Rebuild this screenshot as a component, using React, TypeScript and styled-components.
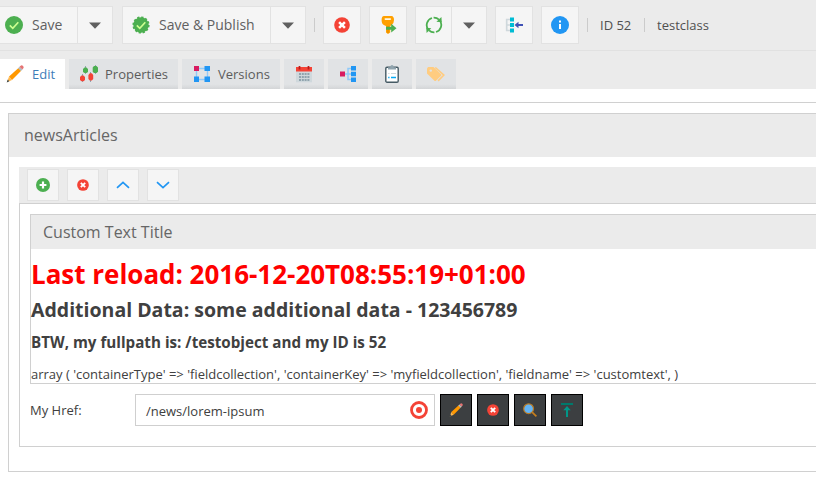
import React from 'react';
import styled, { createGlobalStyle, css } from 'styled-components';

const GlobalStyle = createGlobalStyle`
  *, *::before, *::after { box-sizing: border-box; }
  body {
    margin: 0;
    background: #fff;
    color: #404040;
    font: 13px/18px "Open Sans", "Noto Sans", sans-serif;
    overflow: hidden;
  }
  svg { display: block; flex: none; }
`;

const Page = styled.div`
  width: 816px;
  height: 498px;
  overflow: hidden;
  white-space: nowrap;
`;

const Toolbar = styled.div`
  display: flex;
  height: 51px;
  padding-top: 6px;
  background: #ebebeb;
  border-bottom: 1px solid #e1e1e1;
`;

const buttonFace = css`
  background: #f5f5f5;
  border: 1px solid #e2e2e2;
`;

const ToolButton = styled.div<{ $w?: number; $gap?: number }>`
  ${buttonFace}
  display: flex;
  align-items: center;
  justify-content: center;
  flex: none;
  width: ${p => p.$w ?? 38}px;
  height: 38px;
  margin-right: ${p => p.$gap ?? 8}px;
`;

const SplitButton = styled.div<{ $w: number; $gap: number; $shift?: number }>`
  ${buttonFace}
  display: flex;
  flex: none;
  width: ${p => p.$w}px;
  height: 38px;
  margin-left: ${p => p.$shift ?? 0}px;
  margin-right: ${p => p.$gap}px;
`;

const SplitMain = styled.div<{ $pad: number }>`
  display: flex;
  align-items: center;
  flex: 1;
  padding-left: ${p => p.$pad}px;
`;

const SplitArrow = styled.div`
  display: flex;
  align-items: center;
  justify-content: center;
  width: 35px;
  border-left: 1px solid #e2e2e2;
`;

const ButtonLabel = styled.span<{ $gap: number; $w: number }>`
  width: ${p => p.$w}px;
  margin-left: ${p => p.$gap}px;
  color: #606060;
  font-size: 14px;
`;

const Separator = styled.div<{ $gap: number }>`
  width: 1px;
  height: 14px;
  margin: 12px ${p => p.$gap}px 0 0;
  background: #cbcbcb;
`;

const ToolText = styled.span<{ $w: number }>`
  width: ${p => p.$w}px;
  padding-top: 10px;
  color: #505050;
`;

const TabBar = styled.div`
  display: flex;
  gap: 4px;
  height: 38px;
  padding-top: 8px;
  background: #ebebeb;
`;

const Tab = styled.div<{ $w: number; $active?: boolean; $pad?: number }>`
  display: flex;
  align-items: center;
  flex: none;
  width: ${p => p.$w}px;
  height: 30px;
  padding-left: ${p => p.$pad ?? 12}px;
  color: ${p => (p.$active ? '#3d7db8' : '#5c5c5c')};
  background: ${p => (p.$active ? '#fff' : 'linear-gradient(#e1e3e5 84%, #d3d5d7)')};
`;

const TabLabel = styled.span<{ $gap: number }>`
  margin-left: ${p => p.$gap}px;
`;

const Workspace = styled.div`
  height: 396px;
  margin-top: 13px;
  padding: 10px 0 0 8px;
  border-top: 1px solid #d0d0d0;
`;

const Panel = styled.section`
  height: 359px;
  border: 1px solid #d0d0d0;
  border-right: 0;
`;

const PanelHeader = styled.header<{ $h: number; $pad: number }>`
  display: flex;
  align-items: center;
  height: ${p => p.$h}px;
  padding-left: ${p => p.$pad}px;
  padding-bottom: ${p => (p.$h > 40 ? 2 : 0)}px;
  background: #ebebeb;
  color: #666;
  font-size: 16px;
`;

const Collection = styled.div`
  padding: 10px 0 0 10px;
`;

const CollectionToolbar = styled.div`
  display: flex;
  gap: 8px;
  height: 36px;
  padding: 2px 0 0 8px;
  background: #ebebeb;
`;

const SmallButton = styled.div`
  ${buttonFace}
  display: flex;
  align-items: center;
  justify-content: center;
  width: 32px;
  height: 32px;
`;

const CollectionBody = styled.div`
  height: 244px;
  padding: 10px 0 0 10px;
  border: 1px solid #d0d0d0;
  border-right: 0;
`;

const TextPanel = styled.section`
  height: 170px;
  border: 1px solid #d0d0d0;
  border-right: 0;
`;

const ReloadHeading = styled.h1`
  margin: 7px 0 0;
  color: #f00;
  font-size: 26px;
  line-height: 36px;
  letter-spacing: -0.02px;
`;

const DataHeading = styled.h2`
  margin: 4px 0 0;
  font-size: 19.5px;
  line-height: 28px;
`;

const PathHeading = styled.h3`
  margin: 7px 0 0;
  font-size: 15.2px;
  line-height: 22px;
`;

const Dump = styled.p`
  margin: 12px 0 0;
`;

const FieldRow = styled.div`
  display: flex;
  gap: 5px;
  margin-top: 10px;
`;

const FieldLabel = styled.label`
  width: 100px;
  padding-top: 7px;
`;

const HrefInput = styled.div`
  display: flex;
  align-items: center;
  justify-content: space-between;
  width: 300px;
  height: 32px;
  padding: 2px 6px 0 10px;
  border: 1px solid #cfcfcf;
  svg { margin-top: -2px; }
`;

const DarkButton = styled.div`
  display: flex;
  align-items: center;
  justify-content: center;
  width: 32px;
  height: 32px;
  background: #3c3f41;
  border: 1px solid #000;
`;

const Caret = () => (
  <svg width="12" height="7" viewBox="0 0 12 7"><path d="M0 .5h12L6 6.8z" fill="#606060" /></svg>
);

const SaveIcon = () => (
  <svg width="18" height="18" viewBox="0 0 18 18">
    <circle cx="9" cy="9" r="9" fill="#4caf50" />
    <path d="M4.8 9.3l3 3 5.5-6" fill="none" stroke="#ccff90" strokeWidth="1.7" />
  </svg>
);

const PublishIcon = () => (
  <svg width="18" height="18" viewBox="0 0 18 18">
    <circle cx="9" cy="9" r="7.7" fill="#4caf50" />
    <circle cx="9" cy="9" r="7.7" fill="none" stroke="#4caf50" strokeWidth="1.8" strokeDasharray="2.2 1.83" />
    <path d="M4.8 9.3l3 3 5.5-6" fill="none" stroke="#ccff90" strokeWidth="1.7" />
  </svg>
);

const CrossIcon = ({ size }: { size: number }) => (
  <svg width={size} height={size} viewBox="0 0 16 16">
    <circle cx="8" cy="8" r="7.8" fill="#f44336" />
    <path d="M5.1 5.1l5.8 5.8M10.9 5.1l-5.8 5.8" stroke="#fff" strokeWidth="2.5" />
  </svg>
);

const KeyIcon = () => (
  <svg width="18" height="18" viewBox="0 0 18 18">
    <path d="M5 0h7.5Q15 .3 15 4T12.5 9.2L11.2 10v6.5L9 18l-2-1.5V10L4.8 9Q2.6 8 2.6 4T5 0z" fill="#ffa000" />
    <rect x="5.5" y="2.2" width="6.6" height="1.7" rx=".8" fill="#fff8e1" />
    <path d="M9 10v7" stroke="#d68100" strokeWidth=".8" />
    <path d="M7 10.7h5.2V7.8l5.3 4.4-5.3 4.4v-2.9H7z" fill="#4caf50" />
  </svg>
);

const ReloadIcon = () => (
  <svg width="18" height="18" viewBox="0 0 18 18">
    <g fill="none" stroke="#4caf50" strokeWidth="1.8">
      <path d="M3.2 13.5A7.4 7.4 0 0 1 7 2" />
      <path d="M11 16A7.4 7.4 0 0 0 14.8 4.5" />
      <path d="M8.6 1.6A7.4 7.4 0 0 1 14 3.6" />
      <path d="M9.4 16.4A7.4 7.4 0 0 1 4 14.4" />
    </g>
    <path d="M11.4 5.8L16.4 1l.4 5.2zM6.3 12.2L1.2 11.8l.4 5.2z" fill="#4caf50" />
  </svg>
);

const LocateIcon = () => (
  <svg width="18" height="18" viewBox="0 0 18 18">
    <path d="M6 3.5H1.7v11H6M1.7 9H6" fill="none" stroke="#cfd8dc" strokeWidth="1.7" />
    <path d="M5 1.5h4v4H5zM5 7h4v4H5zM5 12.5h4v4H5z" fill="#00bcd4" />
    <path d="M9.5 9l4-3.2V8H18v2h-4.5v2.2z" fill="#3f51b5" />
  </svg>
);

const InfoIcon = () => (
  <svg width="18" height="18" viewBox="0 0 18 18">
    <circle cx="9" cy="9" r="9" fill="#2196f3" />
    <path d="M8 4.5h2v2H8zM8 8h2v5H8z" fill="#fff" />
  </svg>
);

const PencilIcon = ({ size }: { size: number }) => (
  <svg width={size} height={size} viewBox="0 0 18 18">
    <path d="M3 11.5L12.5 3l2.7 2.8L6 15z" fill="#ff9800" />
    <path d="M12 3.2l1.5-1.4 3 2.8-1.5 1.4z" fill="#b0bec5" />
    <path d="M13.5 1.8L15 .5q1-.7 2 .4t.5 2.2l-1.2 1.4z" fill="#e57373" />
    <path d="M3 11.5L6 15l-5 2.2z" fill="#ffb74d" />
    <path d="M1.7 14.6l1.6 1.7L.7 17.4z" fill="#37474f" />
  </svg>
);

const PropertiesIcon = () => (
  <svg width="18" height="18" viewBox="0 0 18 18">
    <g stroke="#90a4ae" strokeWidth="1"><path d="M2.5 9v8M5.5 1v8M10.5 7v10M15.5 0v9" /></g>
    <g fill="#f44336">
      <path d="M1.5 10.5h2L5 12v3l-1.5 1.2h-2L0 15v-3zM9.8 8.3h2L13.2 10v4l-1.4 1.5h-2L8.4 14v-4z" />
    </g>
    <g fill="#4caf50">
      <path d="M4.5 2.5h2L8 4v3L6.5 8h-2L3 7V4zM14 1h2.5L18 2.5v4.2L16.5 8H14l-1.3-1.3V2.5z" />
    </g>
  </svg>
);

const VersionsIcon = () => (
  <svg width="16" height="16" viewBox="0 0 16 16">
    <path d="M2.5 2.5h11v11h-11z" fill="none" stroke="#90caf9" strokeWidth="1.4" />
    <path d="M0 0h5v5H0z" fill="#d81b60" />
    <path d="M10.5 0h5.5v5h-5.5zM0 10.5h5V16H0zM10.5 10.5H16V16h-5.5z" fill="#2196f3" />
  </svg>
);

const CalendarIcon = () => (
  <svg width="16" height="17" viewBox="0 0 16 17">
    <path d="M0 5h16v11.3H0z" fill="#cfd8dc" />
    <path d="M0 1h16v4.5H0z" fill="#f44336" />
    <path d="M3.5 0v3.5M12.5 0v3.5" stroke="#b71c1c" strokeWidth="1.7" />
    <g stroke="#90a4ae" strokeWidth="2" strokeDasharray="2 .8"><path d="M3 8h10.4M3 11h10.4M3 14h10.4" /></g>
  </svg>
);

const TreeIcon = () => (
  <svg width="16" height="16" viewBox="0 0 16 16">
    <path d="M5 8h7M12 2.5H8v11h4" fill="none" stroke="#90caf9" strokeWidth="1.5" />
    <path d="M0 5.5h5v5H0z" fill="#d81b60" />
    <path d="M11 0h5v4.6h-5zM11 5.7h5v4.6h-5zM11 11.4h5V16h-5z" fill="#2196f3" />
  </svg>
);

const ClipboardIcon = () => (
  <svg width="14" height="18" viewBox="0 0 14 18">
    <rect x=".8" y="2.3" width="12.4" height="14.9" rx="1.2" fill="#fff" stroke="#455a64" strokeWidth="1.4" />
    <path d="M3 4.5V2.2h2.2Q5.5 0 7 0t1.8 2.2H11v2.3z" fill="#90a4ae" />
    <path d="M3.2 8.5h1.3M6 8.5h5" stroke="#cfd8dc" />
    <path d="M3.2 12.5h1.3M6 12.5h5" stroke="#03a9f4" strokeWidth="1.3" />
  </svg>
);

const TagsIcon = () => (
  <svg width="18" height="15" viewBox="0 0 18 15">
    <path d="M0 1.2L1.2 0h5.3l7.8 7.6v1L8.7 14h-1L0 6.5z" fill="#ffcc80" />
    <path d="M8.3.5l8.6 7.6-5.8 5.8" fill="none" stroke="#ffcc80" strokeWidth="1.5" />
    <circle cx="3.8" cy="3.6" r="1.2" fill="#e1e3e5" />
  </svg>
);

const AddIcon = () => (
  <svg width="14" height="14" viewBox="0 0 14 14">
    <circle cx="7" cy="7" r="7" fill="#4caf50" />
    <path d="M7 3.6v6.8M3.6 7h6.8" stroke="#fff" strokeWidth="2.2" />
  </svg>
);

const ChevronIcon = ({ down }: { down?: boolean }) => (
  <svg width="14" height="14" viewBox="0 0 14 14">
    <path d={down ? 'M1 4.2l6 5.5 6-5.5' : 'M1 9.8l6-5.5 6 5.5'} fill="none" stroke="#2196f3" strokeWidth="1.7" />
  </svg>
);

const TargetIcon = () => (
  <svg width="18" height="18" viewBox="0 0 18 18">
    <circle cx="9" cy="9" r="7.5" fill="#fff" stroke="#f44336" strokeWidth="2.8" />
    <circle cx="9" cy="9" r="3" fill="#f44336" />
  </svg>
);

const SearchIcon = () => (
  <svg width="14" height="14" viewBox="0 0 14 14">
    <path d="M8.8 8.8l4.6 4.6" stroke="#c77f1d" strokeWidth="1.7" />
    <circle cx="5.6" cy="5.7" r="4.9" fill="#64b5f6" stroke="#b87922" strokeWidth="1.2" />
  </svg>
);

const UploadIcon = () => (
  <svg width="14" height="14" viewBox="0 0 14 14">
    <path d="M1 0h12v2H1z" fill="#00796b" />
    <path d="M7 3l3.7 4.2H8V14H6V7.2H3.3z" fill="#009688" />
  </svg>
);

export default function App() {
  return (
    <Page>
      <GlobalStyle />
      <Toolbar>
        <SplitButton $w={117} $gap={9} $shift={-4}>
          <SplitMain $pad={8}>
            <SaveIcon />
            <ButtonLabel $gap={9} $w={40}>Save</ButtonLabel>
          </SplitMain>
          <SplitArrow><Caret /></SplitArrow>
        </SplitButton>
        <SplitButton $w={184} $gap={8}>
          <SplitMain $pad={9}>
            <PublishIcon />
            <ButtonLabel $gap={9} $w={100}>Save &amp; Publish</ButtonLabel>
          </SplitMain>
          <SplitArrow><Caret /></SplitArrow>
        </SplitButton>
        <Separator $gap={8} />
        <ToolButton><CrossIcon size={16} /></ToolButton>
        <ToolButton><KeyIcon /></ToolButton>
        <SplitButton $w={72} $gap={8}>
          <SplitMain $pad={9}><ReloadIcon /></SplitMain>
          <SplitArrow><Caret /></SplitArrow>
        </SplitButton>
        <ToolButton><LocateIcon /></ToolButton>
        <ToolButton><InfoIcon /></ToolButton>
        <Separator $gap={12} />
        <ToolText $w={44}>ID 52</ToolText>
        <Separator $gap={12} />
        <ToolText $w={60}>testclass</ToolText>
      </Toolbar>
      <TabBar>
        <Tab $w={65} $active $pad={6}><PencilIcon size={18} /><TabLabel $gap={8}>Edit</TabLabel></Tab>
        <Tab $w={109} $pad={11}><PropertiesIcon /><TabLabel $gap={7}>Properties</TabLabel></Tab>
        <Tab $w={98}><VersionsIcon /><TabLabel $gap={8}>Versions</TabLabel></Tab>
        <Tab $w={40}><CalendarIcon /></Tab>
        <Tab $w={40}><TreeIcon /></Tab>
        <Tab $w={40} $pad={13}><ClipboardIcon /></Tab>
        <Tab $w={40} $pad={11}><TagsIcon /></Tab>
      </TabBar>
      <Workspace>
        <Panel>
          <PanelHeader $h={43} $pad={15}>newsArticles</PanelHeader>
          <Collection>
            <CollectionToolbar>
              <SmallButton><AddIcon /></SmallButton>
              <SmallButton><CrossIcon size={12} /></SmallButton>
              <SmallButton><ChevronIcon /></SmallButton>
              <SmallButton><ChevronIcon down /></SmallButton>
            </CollectionToolbar>
            <CollectionBody>
              <TextPanel>
                <PanelHeader $h={34} $pad={12}>Custom Text Title</PanelHeader>
                <ReloadHeading>Last reload: 2016-12-20T08:55:19+01:00</ReloadHeading>
                <DataHeading>Additional Data: some additional data - 123456789</DataHeading>
                <PathHeading>BTW, my fullpath is: /testobject and my ID is 52</PathHeading>
                <Dump>{"array ( 'containerType' => 'fieldcollection', 'containerKey' => 'myfieldcollection', 'fieldname' => 'customtext', )"}</Dump>
              </TextPanel>
              <FieldRow>
                <FieldLabel>My Href:</FieldLabel>
                <HrefInput>/news/lorem-ipsum<TargetIcon /></HrefInput>
                <DarkButton><PencilIcon size={14} /></DarkButton>
                <DarkButton><CrossIcon size={12} /></DarkButton>
                <DarkButton><SearchIcon /></DarkButton>
                <DarkButton><UploadIcon /></DarkButton>
              </FieldRow>
            </CollectionBody>
          </Collection>
        </Panel>
      </Workspace>
    </Page>
  );
}
